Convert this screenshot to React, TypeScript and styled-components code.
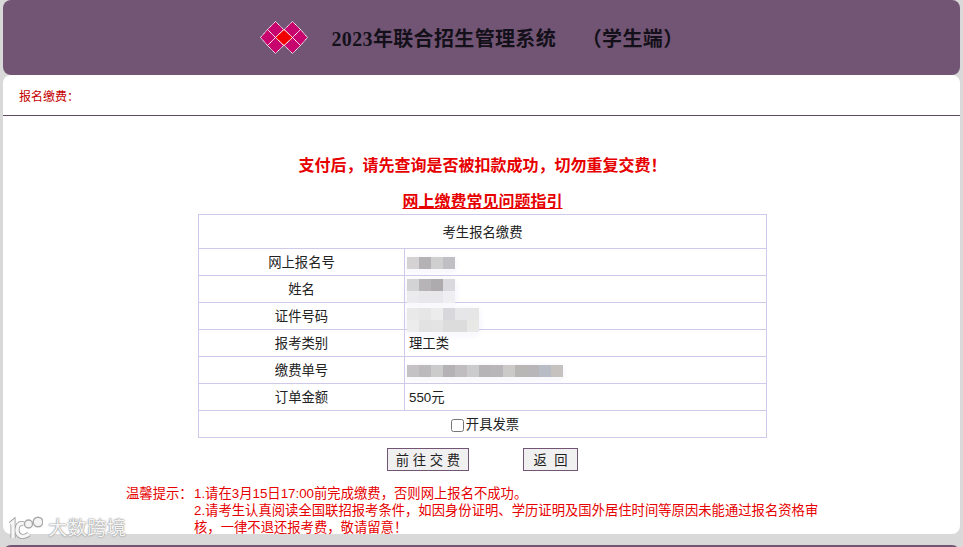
import styled, { createGlobalStyle } from "styled-components";

const GlobalStyle = createGlobalStyle`
  html, body {
    margin: 0;
    padding: 0;
    height: 100%;
    overflow: hidden;
    background: #d9d9d9;
    font-family: "Liberation Sans", "Noto Sans CJK SC", sans-serif;
    font-size: 13.33px;
    color: #222;
  }
`;

const Page = styled.div`
  width: 963px;
  height: 547px;
  padding: 0 3px;
  box-sizing: border-box;
  position: relative;
  overflow: hidden;
`;

const Header = styled.header`
  height: 75px;
  background: #725574;
  border-radius: 8px;
  display: flex;
  align-items: center;
  justify-content: center;
  gap: 24px;
  padding-right: 20px;
`;

const Title = styled.h1`
  margin: 0;
  font-family: "Liberation Serif", "Noto Sans CJK SC", serif;
  font-size: 20px;
  font-weight: 700;
  color: #14101a;
  letter-spacing: 0.35px;
  white-space: pre;
`;

const Main = styled.main`
  height: 459px;
  background: #fff;
  border-radius: 8px;
  display: flex;
  flex-direction: column;
  align-items: center;

  > * {
    flex: none;
  }
`;

const Crumb = styled.div`
  align-self: stretch;
  height: 41px;
  box-sizing: border-box;
  padding: 14px 16px 0;
  border-bottom: 1px solid #5f4a61;
  color: #c40000;
  font-size: 12px;
  line-height: 17px;
`;

const Warning = styled.p`
  margin: 38px 0 0 2px;
  font-size: 16px;
  line-height: 24px;
  font-weight: 700;
  color: #e60000;
`;

const GuideLink = styled.a`
  margin: 12px 0 0 2px;
  font-size: 16px;
  line-height: 24px;
  font-weight: 700;
  color: #e60000;
  text-decoration: underline;
`;

const FeeTable = styled.table`
  width: 569px;
  margin: 0 0 0 2px;
  border-collapse: collapse;
  table-layout: fixed;
`;

const Cell = styled.td<{ $head?: boolean; $left?: boolean }>`
  height: ${(p) => (p.$head ? 31 : 24)}px;
  padding: 2px 0 0 ${(p) => (p.$left ? 4 : 0)}px;
  border: 1px solid #cfcaec;
  text-align: ${(p) => (p.$left ? "left" : "center")};
  line-height: 16px;
`;

const Invoice = styled.label`
  display: inline-flex;
  align-items: center;
  gap: 2px;
  margin: 3px 0 0 5px;
`;

const InvoiceBox = styled.input`
  width: 13px;
  height: 13px;
  margin: 0;
`;

const Mosaic = styled.div<{ $cols: number; $shift: number }>`
  display: flex;
  flex-wrap: wrap;
  width: ${(p) => p.$cols * 12}px;
  margin: ${(p) => p.$shift}px 0 ${(p) => -p.$shift}px -2px;
  border-radius: 6px;
  background: #f7f7fc;
  box-shadow: 0 2px 5px 3px #f8f8fd;
`;

const Pixel = styled.span<{ $shade: string }>`
  width: 12px;
  height: 12px;
  background: ${(p) => p.$shade};
`;

const Actions = styled.div`
  display: flex;
  gap: 54px;
  margin: 10px 0 0 2px;
`;

const ActionButton = styled.button<{ $width: number }>`
  width: ${(p) => p.$width}px;
  height: 23px;
  padding: 0;
  box-sizing: border-box;
  border: 1px solid #725574;
  border-radius: 0;
  background: #f0f0f0;
  color: #222;
  font-family: inherit;
  font-size: 13.33px;
  white-space: pre;
`;

const Notice = styled.div`
  align-self: flex-start;
  display: flex;
  margin: 14px 0 0 123px;
  color: #e60000;
  line-height: 17px;
`;

const NoticeLabel = styled.span`
  flex: none;
  width: 68px;
`;

const NoticeBody = styled.div`
  width: 630px;
`;

const Footer = styled.footer`
  height: 10px;
  margin-top: 11px;
  background: #725574;
  border-radius: 8px 8px 0 0;
`;

const Watermark = styled.div`
  position: absolute;
  left: 9px;
  top: 516px;
  display: flex;
  align-items: center;
  gap: 5px;
  font-size: 19.5px;
  line-height: 25px;
  color: #f4f4f4;
  text-shadow: 0 0 2px #8c8c8c, 0 0 1px #8c8c8c;
`;

const Diamonds = () => (
  <svg width="48" height="33" viewBox="0 0 48 33">
    <g stroke="#fff" strokeWidth="1" strokeDasharray="1.4 0.4" fill="#c8056f">
      <path d="M15.5 .5 23.7 8.5 15.5 16.5 7.5 8.5Z" />
      <path d="M32.5 .5 40.5 8.5 32.5 16.5 24.3 8.5Z" />
      <path d="M7.5 8.5 15.5 16.5 7.5 24.5 .5 16.5Z" />
      <path d="M40.5 8.5 47.5 16.5 40.5 24.5 32.5 16.5Z" />
      <path d="M15.5 16.5 23.7 24.5 15.5 32.5 7.5 24.5Z" />
      <path d="M32.5 16.5 40.5 24.5 32.5 32.5 24.3 24.5Z" />
      <path d="M24 8.5 32.5 16.5 24 24.5 15.5 16.5Z" fill="#f00000" />
    </g>
  </svg>
);

const WatermarkMark = () => (
  <svg width="34" height="25" viewBox="0 0 34 25" fill="none">
    <g stroke="#9a9a9a" strokeWidth="5">
      <path d="M1.5 8 4 6V22" />
      <path d="M15 8C10 6 8 10 8 14 8 20 14 23 20 18" />
    </g>
    <g stroke="#f6f6f6" strokeWidth="3.4">
      <path d="M1.5 8 4 6V22" />
      <path d="M15 8C10 6 8 10 8 14 8 20 14 23 20 18" />
    </g>
    <circle cx="19.5" cy="8" r="4" stroke="#a8a8a8" strokeWidth="1.4" fill="#f4f4f4" />
    <circle cx="29" cy="6" r="4.8" stroke="#a8a8a8" strokeWidth="1.4" fill="#f4f4f4" />
  </svg>
);

const rows: { label: string; value?: string; mosaic?: string[]; cols?: number; shift?: number }[] = [
  { label: "网上报名号", cols: 4, shift: 0, mosaic: ["#d4d2d2", "#b4b2b4", "#cfcfcf", "#c0c0c4"] },
  {
    label: "姓名",
    cols: 4,
    shift: 1,
    mosaic: ["#d3d2d4", "#b6b4b6", "#adabad", "#dadade", "#ebebee", "#e8e8ea", "#e8e8ea", "#efeff2"],
  },
  {
    label: "证件号码",
    cols: 6,
    shift: 3,
    mosaic: [
      "#e9e9e9", "#e6e6e6", "#ececec", "#d8d8dc", "#e6e6e8", "#e6e6e6",
      "#ececec", "#e2e2e2", "#e4e4e4", "#dcdcdc", "#dcdcdc", "#e8e8e6",
    ],
  },
  { label: "报考类别", value: "理工类" },
  {
    label: "缴费单号",
    cols: 13,
    shift: 0,
    mosaic: [
      "#c4c2c4", "#bcbabc", "#cbcbcb", "#b4b2b4", "#bfbdbf", "#cbcacc", "#b6b4b6",
      "#b8b6b8", "#ccc9c9", "#b9b6b6", "#b8b6b8", "#b8bcc4", "#c6c2c0",
    ],
  },
  { label: "订单金额", value: "550元" },
];

export default function App() {
  return (
    <>
      <GlobalStyle />
      <Page>
        <Header>
          <Diamonds />
          <Title>2023年联合招生管理系统　 （学生端）</Title>
        </Header>
        <Main>
          <Crumb>报名缴费：</Crumb>
          <Warning>支付后，请先查询是否被扣款成功，切勿重复交费！</Warning>
          <GuideLink>网上缴费常见问题指引</GuideLink>
          <FeeTable>
            <colgroup>
              <col style={{ width: 206 }} />
              <col />
            </colgroup>
            <tbody>
              <tr>
                <Cell $head colSpan={2}>考生报名缴费</Cell>
              </tr>
              {rows.map((row) => (
                <tr key={row.label}>
                  <Cell>{row.label}</Cell>
                  <Cell $left>
                    {row.mosaic ? (
                      <Mosaic $cols={row.cols ?? 1} $shift={row.shift ?? 0}>
                        {row.mosaic.map((shade, i) => (
                          <Pixel key={i} $shade={shade} />
                        ))}
                      </Mosaic>
                    ) : (
                      row.value
                    )}
                  </Cell>
                </tr>
              ))}
              <tr>
                <Cell colSpan={2}>
                  <Invoice>
                    <InvoiceBox type="checkbox" />
                    开具发票
                  </Invoice>
                </Cell>
              </tr>
            </tbody>
          </FeeTable>
          <Actions>
            <ActionButton $width={82}>前 往 交 费</ActionButton>
            <ActionButton $width={55}>返  回</ActionButton>
          </Actions>
          <Notice>
            <NoticeLabel>温馨提示：</NoticeLabel>
            <NoticeBody>
              1.请在3月15日17:00前完成缴费，否则网上报名不成功。
              <br />
              2.请考生认真阅读全国联招报考条件，如因身份证明、学历证明及国外居住时间等原因未能通过报名资格审核，一律不退还报考费，敬请留意！
            </NoticeBody>
          </Notice>
        </Main>
        <Footer />
        <Watermark>
          <WatermarkMark />
          大数跨境
        </Watermark>
      </Page>
    </>
  );
}
